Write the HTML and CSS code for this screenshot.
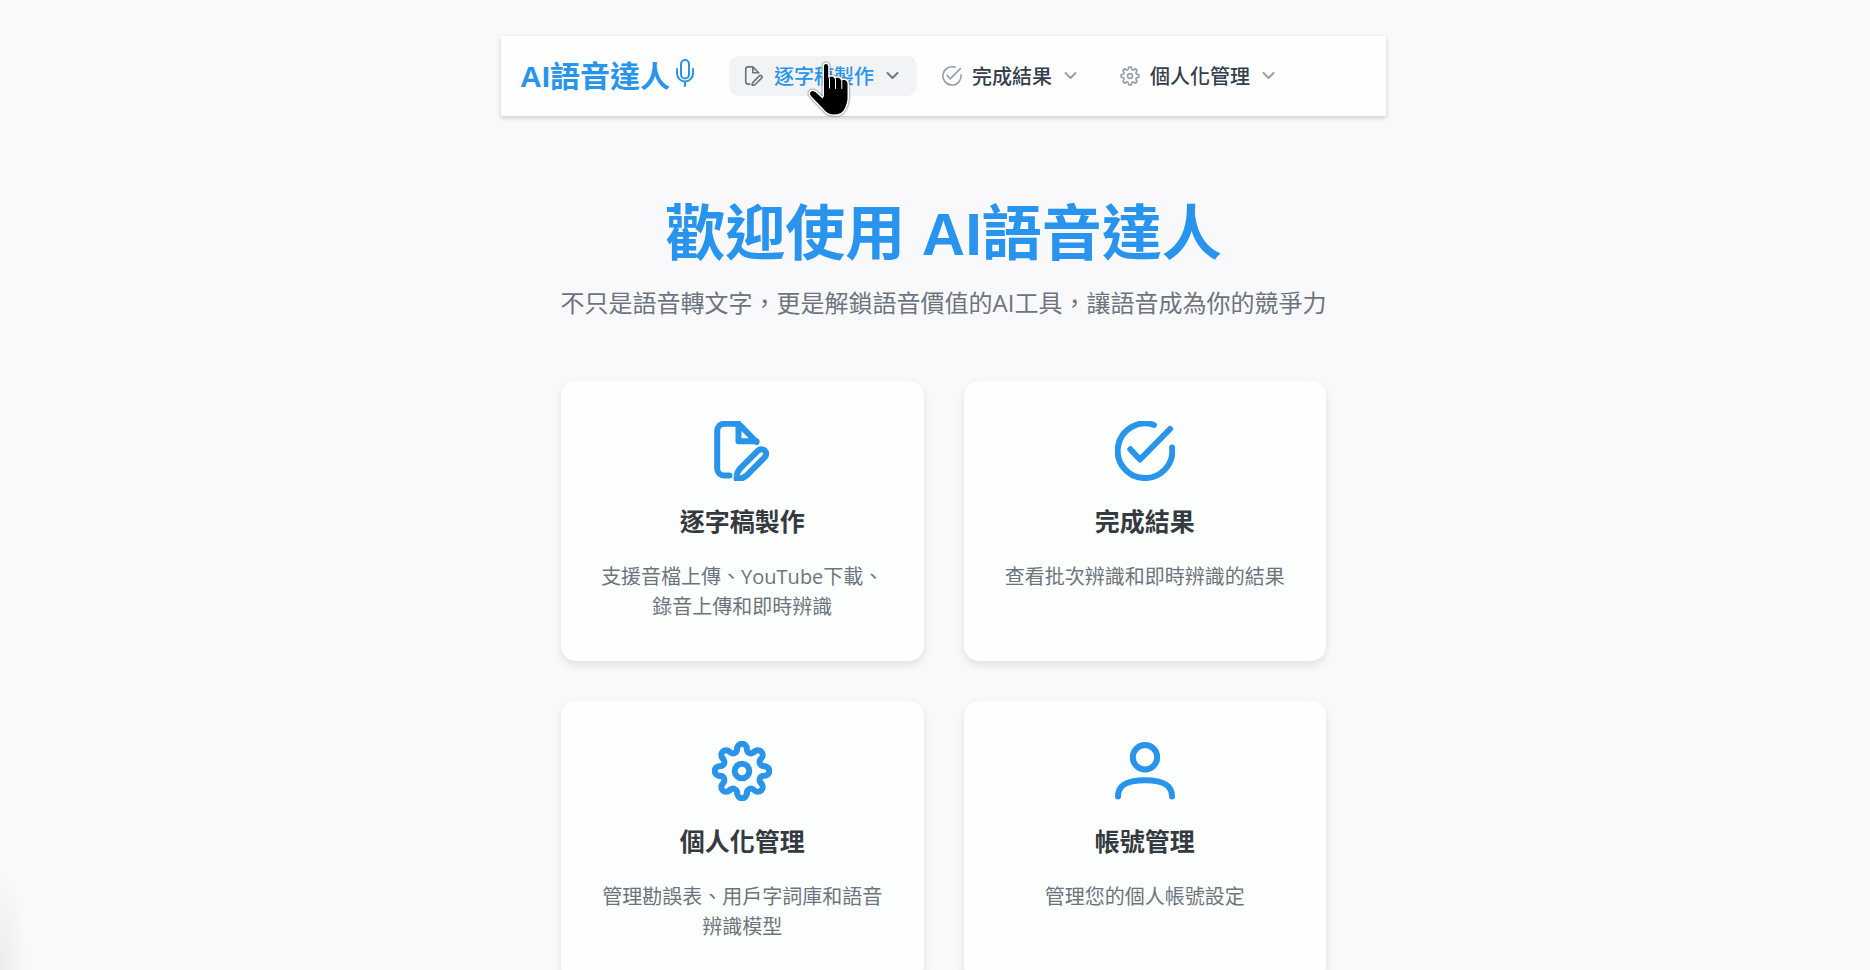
FILE: index.html
```html
<!DOCTYPE html>
<html lang="zh-Hant">

<head>
    <meta charset="UTF-8">
    <meta name="viewport" content="width=device-width, initial-scale=1.0">
    <title>AI語音達人</title>
    <link rel="stylesheet" href="styles.css">
</head>

<body>
    <!-- Shared icons -->
    <svg class="sprite" aria-hidden="true">
        <symbol id="icon-edit" viewBox="0 0 60 60">
            <path d="M17.5 54.5H12A7 7 0 0 1 5.2 47.5V9.7A7 7 0 0 1 12.2 2.7H26.5L44.5 21M26.5 2.7V20.3H44.5" />
            <path d="M46 29.6A4.5 4.5 0 0 1 52.8 36.2L34.2 54.8Q31.5 57.3 28 57.5L24.5 57.7L24.8 54.5Q25 51 27.5 48.2Z" />
        </symbol>
        <symbol id="icon-check" viewBox="0 0 60 60">
            <path d="M39 4A27.3 27.3 0 1 0 57.1 26.5" />
            <path d="M15.3 28.3L25 38.5L55 8" />
        </symbol>
        <symbol id="icon-gear" viewBox="0 0 60 60">
            <g id="tooth">
                <path d="M25.2 7.5A4.8 4.8 0 0 1 34.8 7.5C34.8 12.2 39.2 14 42.5 10.7" />
            </g>
            <use href="#tooth" transform="rotate(45 30 30)" />
            <use href="#tooth" transform="rotate(90 30 30)" />
            <use href="#tooth" transform="rotate(135 30 30)" />
            <use href="#tooth" transform="rotate(180 30 30)" />
            <use href="#tooth" transform="rotate(225 30 30)" />
            <use href="#tooth" transform="rotate(270 30 30)" />
            <use href="#tooth" transform="rotate(315 30 30)" />
            <circle cx="30" cy="30" r="7.3" />
        </symbol>
        <symbol id="icon-user" viewBox="0 0 60 60">
            <circle cx="30" cy="16.2" r="12.2" />
            <path d="M3 55.5C3 43 14 39.3 30 39.3S57 43 57 55.5" />
        </symbol>
        <symbol id="icon-chevron" viewBox="0 0 20 20">
            <path d="M5.5 7L10.5 12L15.5 7" />
        </symbol>
    </svg>

    <header class="navbar">
        <a class="logo" href="#">AI語音達人<svg class="mic" viewBox="0 0 20 28">
                <rect x="6" y="1" width="8" height="18.5" rx="4" />
                <path d="M2 10V14.5A8 8 0 0 0 18 14.5V10M10 23V27" />
            </svg></a>
        <nav class="menu">
            <button class="menu-item active" type="button">
                <svg class="icon"><use href="#icon-edit" /></svg>
                <span>逐字稿製作</span>
                <svg class="chevron"><use href="#icon-chevron" /></svg>
                <svg class="cursor" viewBox="0 0 44 56" aria-hidden="true">
                    <path class="hand" d="M16 34V4Q16 2 18 2T20.2 4V16Q21.5 14.5 24 14.5Q26.5 15 26.8 17Q28 15.5 30.5 15.8Q33 16.5 33.2 19Q34.5 17.5 37 18Q39.5 19 39.5 21.5V37Q39.3 41 37 46Q34 52.5 27 52.5Q19 52.5 15.5 47L3 34Q1 31.5 3 29.5Q5 28 8 30.5L14.5 36.5Z" />
                    <path class="gaps" d="M21.5 16V26M27.5 17V26.5M33.8 19V26.5" />
                </svg>
            </button>
            <button class="menu-item" type="button">
                <svg class="icon"><use href="#icon-check" /></svg>
                <span>完成結果</span>
                <svg class="chevron"><use href="#icon-chevron" /></svg>
            </button>
            <button class="menu-item" type="button">
                <svg class="icon"><use href="#icon-gear" /></svg>
                <span>個人化管理</span>
                <svg class="chevron"><use href="#icon-chevron" /></svg>
            </button>
        </nav>
    </header>

    <main class="container">
        <h1>歡迎使用 AI語音達人</h1>
        <p class="subtitle">不只是語音轉文字，更是解鎖語音價值的AI工具，讓語音成為你的競爭力</p>

        <div class="cards">
            <a class="card" href="#">
                <svg class="card-icon"><use href="#icon-edit" /></svg>
                <h2>逐字稿製作</h2>
                <p>支援音檔上傳、YouTube下載、錄音上傳和即時辨識</p>
            </a>
            <a class="card" href="#">
                <svg class="card-icon"><use href="#icon-check" /></svg>
                <h2>完成結果</h2>
                <p>查看批次辨識和即時辨識的結果</p>
            </a>
            <a class="card" href="#">
                <svg class="card-icon"><use href="#icon-gear" /></svg>
                <h2>個人化管理</h2>
                <p>管理勘誤表、用戶字詞庫和語音辨識模型</p>
            </a>
            <a class="card" href="#">
                <svg class="card-icon"><use href="#icon-user" /></svg>
                <h2>帳號管理</h2>
                <p>管理您的個人帳號設定</p>
            </a>
        </div>
    </main>
</body>

</html>
```
FILE: styles.css
```css
* {
    box-sizing: border-box;
}

html {
    scrollbar-width: none;
}

body {
    margin: 0;
    padding: 36px 0 36px 17px;
    /* soft shade in the lower left corner */
    background: #f9f9fb radial-gradient(ellipse at bottom left, #ececee, #f9f9fb 70%) left bottom / 28px 100px no-repeat fixed;
    font-family: "Open Sans", "Noto Sans CJK TC", sans-serif;
}

svg {
    fill: none;
    stroke: currentColor;
    stroke-linecap: round;
    stroke-linejoin: round;
}

.sprite {
    position: absolute;
    width: 0;
    height: 0;
}

/* Top navigation */
.navbar {
    display: flex;
    align-items: center;
    gap: 34px;
    max-width: 885px;
    height: 80px;
    margin: 0 auto;
    padding: 0 19px;
    background: #fefefe;
    box-shadow: 0 2px 5px rgba(0, 0, 0, 0.18);
}

.logo {
    display: flex;
    align-items: center;
    gap: 5px;
    padding-top: 2px;
    color: #2894ea;
    font-family: "Liberation Sans", "Noto Sans CJK TC", sans-serif;
    font-size: 30px;
    font-weight: 600;
    line-height: 40px;
    text-decoration: none;
    white-space: nowrap;
}

.mic {
    width: 20px;
    height: 28px;
    margin-bottom: 8px;
    stroke-width: 2;
}

.menu {
    display: flex;
    gap: 10px;
}

.menu-item {
    position: relative;
    display: flex;
    align-items: center;
    height: 40px;
    padding: 0 15px;
    border: 0;
    border-radius: 10px;
    background: none;
    color: #343f4d;
    font-family: inherit;
    font-size: 20px;
    font-weight: 500;
    line-height: 30px;
    white-space: nowrap;
    cursor: pointer;
}

.menu-item span {
    padding-top: 2px;
}

.menu-item.active {
    background: #f2f3f7;
    color: #2894ea;
}

.icon {
    width: 20px;
    height: 20px;
    margin-right: 10px;
    color: #98a1ab;
    stroke-width: 5;
    overflow: visible;
}

.chevron {
    width: 20px;
    height: 20px;
    margin-left: 8px;
    color: #98a1ab;
    stroke-width: 2;
}

.active .icon,
.active .chevron {
    color: #6b7580;
}

/* Pointer over the hovered menu item */
.cursor {
    position: absolute;
    top: 6px;
    left: 79px;
    width: 44px;
    height: 56px;
    overflow: visible;
    stroke: #fff;
    filter: drop-shadow(0 0 1px #444);
}

.hand {
    fill: #000;
    stroke-width: 3;
    paint-order: stroke;
}

.gaps {
    stroke-width: 1;
}

/* Page content */
.container {
    max-width: 885px;
    margin: 0 auto;
    padding: 81px 60px 60px;
}

h1 {
    margin: 0 0 12px;
    color: #2894ee;
    font-family: "Liberation Sans", "Noto Sans CJK TC", sans-serif;
    font-size: 60px;
    font-weight: 700;
    line-height: 76px;
    text-align: center;
}

.subtitle {
    margin: 0 -10px 60px;
    color: #6c757d;
    font-size: 24px;
    line-height: 36px;
    text-align: center;
}

.cards {
    display: grid;
    grid-template-columns: 1fr 1fr;
    gap: 40px;
}

.card {
    padding: 40px 40px 39px;
    border-radius: 15px;
    background: #fdfefe;
    box-shadow: 0 4px 8px rgba(0, 0, 0, 0.1);
    text-align: center;
    text-decoration: none;
}

.card-icon {
    display: block;
    width: 60px;
    height: 60px;
    margin: 0 auto 20px;
    color: #2894ea;
    stroke-width: 6;
    overflow: visible;
}

.card h2 {
    margin: 0 0 21px;
    color: #343a40;
    font-size: 25px;
    font-weight: 700;
    line-height: 40px;
}

.card p {
    margin: 0;
    color: #6c757d;
    font-size: 20px;
    line-height: 30px;
}
```
